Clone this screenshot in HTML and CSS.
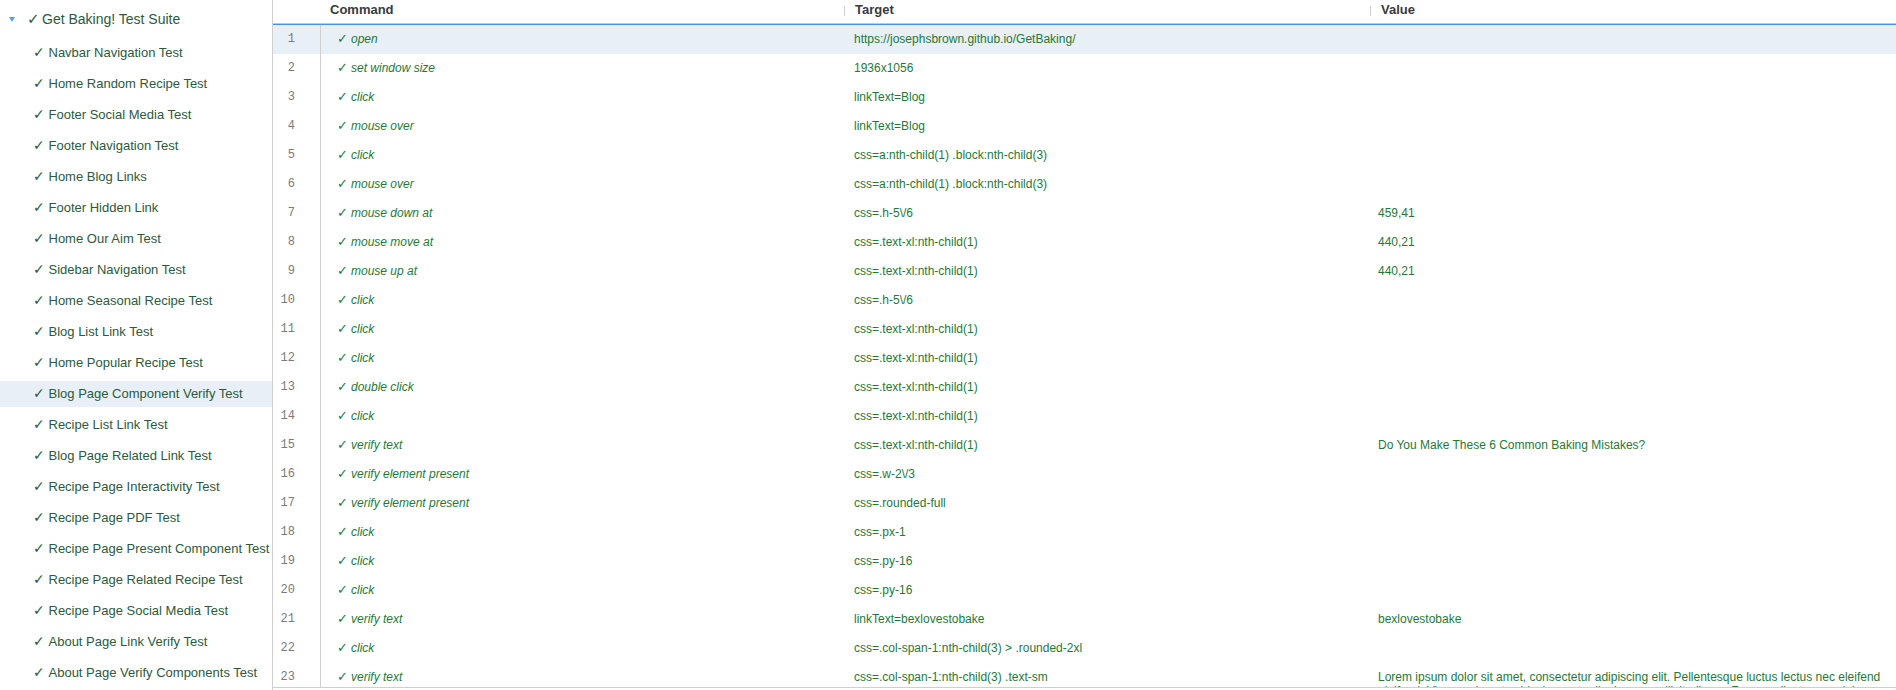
FILE: index.html
```html
<!DOCTYPE html>
<html>
<head>
<meta charset="utf-8">
<link rel="stylesheet" href="styles.css">
</head>
<body>
<div class="app">
  <aside class="sidebar">
    <div class="suite"><span class="caret"></span><span class="scheck">✓</span>Get Baking! Test Suite</div>
    <ul class="tests">
      <li class="test"><span class="tcheck">✓</span>Navbar Navigation Test</li>
      <li class="test"><span class="tcheck">✓</span>Home Random Recipe Test</li>
      <li class="test"><span class="tcheck">✓</span>Footer Social Media Test</li>
      <li class="test"><span class="tcheck">✓</span>Footer Navigation Test</li>
      <li class="test"><span class="tcheck">✓</span>Home Blog Links</li>
      <li class="test"><span class="tcheck">✓</span>Footer Hidden Link</li>
      <li class="test"><span class="tcheck">✓</span>Home Our Aim Test</li>
      <li class="test"><span class="tcheck">✓</span>Sidebar Navigation Test</li>
      <li class="test"><span class="tcheck">✓</span>Home Seasonal Recipe Test</li>
      <li class="test"><span class="tcheck">✓</span>Blog List Link Test</li>
      <li class="test"><span class="tcheck">✓</span>Home Popular Recipe Test</li>
      <li class="test selected"><span class="tcheck">✓</span>Blog Page Component Verify Test</li>
      <li class="test"><span class="tcheck">✓</span>Recipe List Link Test</li>
      <li class="test"><span class="tcheck">✓</span>Blog Page Related Link Test</li>
      <li class="test"><span class="tcheck">✓</span>Recipe Page Interactivity Test</li>
      <li class="test"><span class="tcheck">✓</span>Recipe Page PDF Test</li>
      <li class="test"><span class="tcheck">✓</span>Recipe Page Present Component Test</li>
      <li class="test"><span class="tcheck">✓</span>Recipe Page Related Recipe Test</li>
      <li class="test"><span class="tcheck">✓</span>Recipe Page Social Media Test</li>
      <li class="test"><span class="tcheck">✓</span>About Page Link Verify Test</li>
      <li class="test"><span class="tcheck">✓</span>About Page Verify Components Test</li>
    </ul>
  </aside>
  <main class="editor">
    <div class="thead">
      <div class="th th-num"></div>
      <div class="th th-cmd">Command</div>
      <div class="th th-sep">Target</div>
      <div class="th th-sep">Value</div>
    </div>
    <div class="tbody">
      <div class="row selected"><div class="num">1</div><div class="cmd"><span class="ccheck">✓</span>open</div><div class="cell">https://josephsbrown.github.io/GetBaking/</div><div class="cell val"></div></div>
      <div class="row"><div class="num">2</div><div class="cmd"><span class="ccheck">✓</span>set window size</div><div class="cell">1936x1056</div><div class="cell val"></div></div>
      <div class="row"><div class="num">3</div><div class="cmd"><span class="ccheck">✓</span>click</div><div class="cell">linkText=Blog</div><div class="cell val"></div></div>
      <div class="row"><div class="num">4</div><div class="cmd"><span class="ccheck">✓</span>mouse over</div><div class="cell">linkText=Blog</div><div class="cell val"></div></div>
      <div class="row"><div class="num">5</div><div class="cmd"><span class="ccheck">✓</span>click</div><div class="cell">css=a:nth-child(1) .block:nth-child(3)</div><div class="cell val"></div></div>
      <div class="row"><div class="num">6</div><div class="cmd"><span class="ccheck">✓</span>mouse over</div><div class="cell">css=a:nth-child(1) .block:nth-child(3)</div><div class="cell val"></div></div>
      <div class="row"><div class="num">7</div><div class="cmd"><span class="ccheck">✓</span>mouse down at</div><div class="cell">css=.h-5\/6</div><div class="cell val">459,41</div></div>
      <div class="row"><div class="num">8</div><div class="cmd"><span class="ccheck">✓</span>mouse move at</div><div class="cell">css=.text-xl:nth-child(1)</div><div class="cell val">440,21</div></div>
      <div class="row"><div class="num">9</div><div class="cmd"><span class="ccheck">✓</span>mouse up at</div><div class="cell">css=.text-xl:nth-child(1)</div><div class="cell val">440,21</div></div>
      <div class="row"><div class="num">10</div><div class="cmd"><span class="ccheck">✓</span>click</div><div class="cell">css=.h-5\/6</div><div class="cell val"></div></div>
      <div class="row"><div class="num">11</div><div class="cmd"><span class="ccheck">✓</span>click</div><div class="cell">css=.text-xl:nth-child(1)</div><div class="cell val"></div></div>
      <div class="row"><div class="num">12</div><div class="cmd"><span class="ccheck">✓</span>click</div><div class="cell">css=.text-xl:nth-child(1)</div><div class="cell val"></div></div>
      <div class="row"><div class="num">13</div><div class="cmd"><span class="ccheck">✓</span>double click</div><div class="cell">css=.text-xl:nth-child(1)</div><div class="cell val"></div></div>
      <div class="row"><div class="num">14</div><div class="cmd"><span class="ccheck">✓</span>click</div><div class="cell">css=.text-xl:nth-child(1)</div><div class="cell val"></div></div>
      <div class="row"><div class="num">15</div><div class="cmd"><span class="ccheck">✓</span>verify text</div><div class="cell">css=.text-xl:nth-child(1)</div><div class="cell val">Do You Make These 6 Common Baking Mistakes?</div></div>
      <div class="row"><div class="num">16</div><div class="cmd"><span class="ccheck">✓</span>verify element present</div><div class="cell">css=.w-2\/3</div><div class="cell val"></div></div>
      <div class="row"><div class="num">17</div><div class="cmd"><span class="ccheck">✓</span>verify element present</div><div class="cell">css=.rounded-full</div><div class="cell val"></div></div>
      <div class="row"><div class="num">18</div><div class="cmd"><span class="ccheck">✓</span>click</div><div class="cell">css=.px-1</div><div class="cell val"></div></div>
      <div class="row"><div class="num">19</div><div class="cmd"><span class="ccheck">✓</span>click</div><div class="cell">css=.py-16</div><div class="cell val"></div></div>
      <div class="row"><div class="num">20</div><div class="cmd"><span class="ccheck">✓</span>click</div><div class="cell">css=.py-16</div><div class="cell val"></div></div>
      <div class="row"><div class="num">21</div><div class="cmd"><span class="ccheck">✓</span>verify text</div><div class="cell">linkText=bexlovestobake</div><div class="cell val">bexlovestobake</div></div>
      <div class="row"><div class="num">22</div><div class="cmd"><span class="ccheck">✓</span>click</div><div class="cell">css=.col-span-1:nth-child(3) &gt; .rounded-2xl</div><div class="cell val"></div></div>
      <div class="row"><div class="num">23</div><div class="cmd"><span class="ccheck">✓</span>verify text</div><div class="cell">css=.col-span-1:nth-child(3) .text-sm</div><div class="cell val">Lorem ipsum dolor sit amet, consectetur adipiscing elit. Pellentesque luctus lectus nec eleifend eleifend. Vivamus in est vehicula, auctor ligula nec, sollicitudin eu. Fusce pellentesque dolor tincidunt.</div></div>
    </div>
  </main>
</div>
</body>
</html>
```

FILE: styles.css
```css
* { box-sizing: border-box; }
html, body { margin: 0; padding: 0; background: #fff; }
body {
  font-family: "Liberation Sans", Arial, sans-serif;
  width: 1896px;
  height: 690px;
  overflow: hidden;
}
.app { display: flex; height: 690px; }

.sidebar {
  width: 273px;
  flex: none;
  border-right: 1px solid #cfcfcf;
  height: 690px;
  overflow: hidden;
}
.suite {
  height: 38px;
  line-height: 38px;
  font-size: 14px;
  color: #2b5a3c;
  padding-left: 9px;
  margin-bottom: 2px;
  display: flex;
  align-items: center;
  white-space: nowrap;
}
.caret {
  width: 0; height: 0;
  border-left: 3.5px solid transparent;
  border-right: 3.5px solid transparent;
  border-top: 5px solid #5a9cf0;
  margin-right: 12px;
  margin-top: 1px;
}
.scheck {
  display: inline-block;
  width: 15px;
  font-family: "DejaVu Sans", sans-serif;
  font-size: 15px;
  line-height: 14px;
}
.tests { list-style: none; margin: 0; padding: 0; }
.test {
  height: 26px;
  line-height: 26px;
  margin-bottom: 5px;
  font-size: 13px;
  color: #2b5a3c;
  padding-left: 33px;
  white-space: nowrap;
}
.test.selected { background: #e8eff7; }
.tcheck {
  display: inline-block;
  width: 15.5px;
  font-family: "DejaVu Sans", sans-serif;
  font-size: 14px;
  line-height: 13px;
}

.editor { flex: 1; display: flex; flex-direction: column; height: 688px; border-bottom: 1px solid #cfcfcf; }
.thead {
  display: grid;
  grid-template-columns: 47px 524px 526px 1fr;
  height: 25px;
  border-bottom: 1px solid #4a8ff0;
  box-shadow: inset 0 -1px 0 #c8c8c8;
  padding-bottom: 1px;
  flex: none;
}
.th {
  font-size: 13px;
  font-weight: bold;
  color: #3a3a3a;
  line-height: 20px;
  padding-left: 11px;
  position: relative;
}
.th-cmd { padding-left: 10px; }
.th-sep::before {
  content: "";
  position: absolute;
  left: 0; top: 6px;
  width: 1px; height: 10px;
  background: #cccccc;
}
.tbody { flex: 1; overflow: hidden; }
.row {
  display: grid;
  grid-template-columns: 48px 533px 524px 1fr;
  height: 29px;
  font-size: 12px;
  line-height: 14px;
  color: #1e7a36;
}
.row.selected { background: #e8eff7; }
.row > div { padding-top: 7px; }
.num {
  font-family: "Liberation Mono", monospace;
  color: #7a7a7a;
  text-align: right;
  padding-right: 25px;
  border-right: 1px solid #cfcfcf;
}
.cmd { font-style: italic; padding-left: 16px; white-space: nowrap; }
.ccheck {
  display: inline-block;
  width: 14px;
  font-family: "DejaVu Sans", sans-serif;
  font-style: italic;
  font-size: 13px;
  line-height: 12px;
}
.val { padding-right: 12px; }
```
